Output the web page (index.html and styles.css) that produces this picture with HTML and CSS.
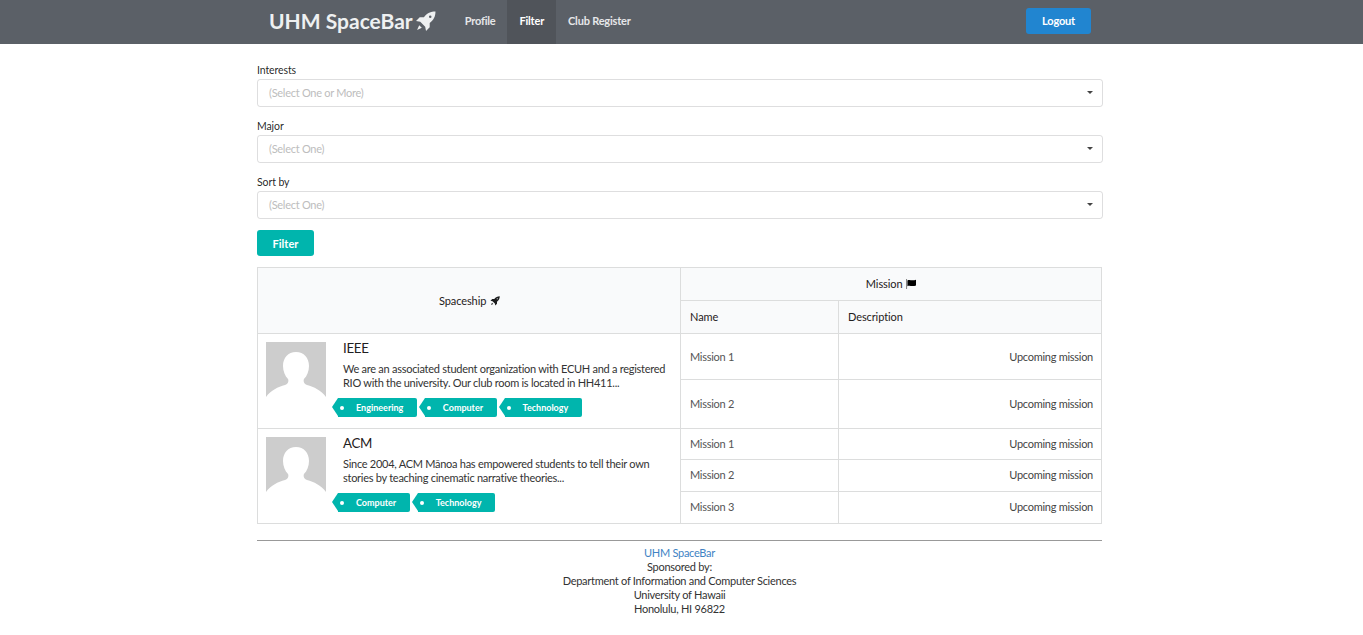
FILE: index.html
```html
<!DOCTYPE html>
<html lang="en">
<head>
    <meta charset="UTF-8">
    <title>UHM SpaceBar</title>
    <link rel="stylesheet" href="styles.css">
</head>
<body>

<header class="navbar">
    <nav class="nav-inner">
        <a class="brand" href="#">UHM SpaceBar
            <svg class="rocket rocket-large" viewBox="0 0 20 20"><path fill-rule="evenodd" d="M19.500.5c-4.500 0-8 1.500-11 5.500H4.500L1 9.500l4 .8 4.700 4.700.8 4 3.500-3.500v-4c4-3 5.500-6.500 5.500-11zM14.500 4.300a1.200 1.200 0 1 1 0 2.400 1.200 1.200 0 0 1 0-2.400zM4 13.500l2.500 2.500-4.500 2z"/></svg>
        </a>
        <a class="nav-item" href="#">Profile</a>
        <a class="nav-item active" href="#">Filter</a>
        <a class="nav-item" href="#">Club Register</a>
        <a class="logout" href="#">Logout</a>
    </nav>
</header>

<main class="container">
    <form class="filter-form">
        <div class="field">
            <label>Interests</label>
            <div class="select">(Select One or More)</div>
        </div>
        <div class="field">
            <label>Major</label>
            <div class="select">(Select One)</div>
        </div>
        <div class="field">
            <label>Sort by</label>
            <div class="select">(Select One)</div>
        </div>
        <button class="filter-btn" type="button">Filter</button>
    </form>

    <table class="clubs">
        <colgroup>
            <col class="col-club">
            <col class="col-name">
            <col class="col-desc">
        </colgroup>
        <thead>
            <tr class="row-head">
                <th rowspan="2" class="center">Spaceship
                    <svg class="rocket" viewBox="0 0 20 20"><path fill-rule="evenodd" d="M19.500.5c-4.500 0-8 1.500-11 5.500H4.500L1 9.500l4 .8 4.700 4.700.8 4 3.500-3.500v-4c4-3 5.500-6.500 5.500-11zM14.500 4.300a1.200 1.200 0 1 1 0 2.400 1.200 1.200 0 0 1 0-2.400zM4 13.500l2.500 2.500-4.500 2z"/></svg>
                </th>
                <th colspan="2" class="center">Mission
                    <svg class="flag" viewBox="0 0 16 14"><path d="M1 0h1.500v14H1z" fill="#888"/><path d="M3 2c3-2 6 1 12-1v8c-6 2-9-1-12 1z"/></svg>
                </th>
            </tr>
            <tr class="row-head">
                <th>Name</th>
                <th>Description</th>
            </tr>
        </thead>
        <tbody>
            <tr class="row-tall">
                <td rowspan="2" class="club-cell">
                    <div class="club">
                        <svg class="avatar" viewBox="0 0 60 60"><rect width="60" height="60" fill="#cdcdcd"/><path d="M30 10c8 0 13 6 13 14 0 5-2 10-5 13-1 2 0 5 3 6 7 2 14 5 19 12v5H0v-5c5-7 12-10 19-12 3-1 4-4 3-6-3-3-5-8-5-13 0-8 5-14 13-14z" fill="#fff"/></svg>
                        <div class="club-body">
                            <h3>IEEE</h3>
                            <p>We are an associated student organization with ECUH and a registered RIO with the university. Our club room is located in HH411...</p>
                            <div class="tags">
                                <span class="tag">Engineering</span>
                                <span class="tag">Computer</span>
                                <span class="tag">Technology</span>
                            </div>
                        </div>
                    </div>
                </td>
                <td>Mission 1</td>
                <td class="right">Upcoming mission</td>
            </tr>
            <tr class="row-tall-last">
                <td>Mission 2</td>
                <td class="right">Upcoming mission</td>
            </tr>
            <tr class="row-first">
                <td rowspan="3" class="club-cell">
                    <div class="club">
                        <svg class="avatar" viewBox="0 0 60 60"><rect width="60" height="60" fill="#cdcdcd"/><path d="M30 10c8 0 13 6 13 14 0 5-2 10-5 13-1 2 0 5 3 6 7 2 14 5 19 12v5H0v-5c5-7 12-10 19-12 3-1 4-4 3-6-3-3-5-8-5-13 0-8 5-14 13-14z" fill="#fff"/></svg>
                        <div class="club-body">
                            <h3>ACM</h3>
                            <p>Since 2004, ACM Mānoa has empowered students to tell their own stories by teaching cinematic narrative theories...</p>
                            <div class="tags">
                                <span class="tag">Computer</span>
                                <span class="tag">Technology</span>
                            </div>
                        </div>
                    </div>
                </td>
                <td>Mission 1</td>
                <td class="right">Upcoming mission</td>
            </tr>
            <tr class="row-short">
                <td>Mission 2</td>
                <td class="right">Upcoming mission</td>
            </tr>
            <tr class="row-short">
                <td>Mission 3</td>
                <td class="right">Upcoming mission</td>
            </tr>
        </tbody>
    </table>

    <footer class="footer">
        <a href="#">UHM SpaceBar</a><br>
        Sponsored by:<br>
        Department of Information and Computer Sciences<br>
        University of Hawaii<br>
        Honolulu, HI 96822
    </footer>
</main>

</body>
</html>
```

FILE: styles.css
```css
body {
    font-family: 'Lato', sans-serif;
    font-size: 11px;
    line-height: 14px;
    letter-spacing: -0.27px;
    margin: 0;
    padding-right: 4px;
    background-color: #fff;
    color: rgba(0, 0, 0, 0.87);
}

a {
    text-decoration: none;
}

/* Top bar */
.navbar {
    background-color: #5b6067;
    height: 44px;
    margin-right: -4px;
    padding-right: 4px;
}

.nav-inner {
    width: 845px;
    height: 44px;
    margin: 0 auto;
    display: flex;
    align-items: stretch;
}

.brand {
    display: flex;
    align-items: center;
    gap: 2px;
    margin-left: 12px;
    margin-right: 17px;
    padding-bottom: 2px;
    color: #eef0f1;
    font-size: 21px;
    font-weight: 700;
    letter-spacing: 0;
    white-space: nowrap;
}

.rocket {
    display: inline-block;
    width: 10px;
    height: 10px;
    margin-left: 1px;
    fill: #1b1c1d;
    vertical-align: -1px;
}

.rocket-large {
    width: 21px;
    height: 21px;
    margin-left: 0;
    fill: #eef0f1;
}

.nav-item {
    display: flex;
    align-items: center;
    padding: 0 12px 2px;
    color: #e6e7e9;
    font-size: 11px;
    font-weight: 700;
    letter-spacing: -0.2px;
}

.nav-item.active {
    background-color: #50545a;
    color: #fff;
}

.logout {
    align-self: center;
    margin-left: auto;
    margin-right: 11px;
    margin-bottom: 2px;
    width: 65px;
    height: 26px;
    line-height: 26px;
    text-align: center;
    background-color: #2185d0;
    color: #fff;
    font-weight: 700;
    letter-spacing: -0.2px;
    border-radius: 3px;
}

/* Filter form */
.container {
    width: 845px;
    margin: 0 auto;
}

.filter-form {
    padding-top: 19px;
}

.field {
    margin-bottom: 12px;
}

.field label {
    display: block;
    height: 16px;
    line-height: 14px;
    font-size: 10.500px;
    letter-spacing: -0.1px;
}

.select {
    height: 26px;
    line-height: 26px;
    margin-right: -1px;
    padding-left: 11px;
    border: 1px solid rgba(34, 36, 38, 0.15);
    border-radius: 3px;
    color: #bdbdbd;
    position: relative;
}

.select::after {
    content: '';
    position: absolute;
    right: 9px;
    top: 11px;
    border-left: 3px solid transparent;
    border-right: 3px solid transparent;
    border-top: 3px solid #444;
}

.filter-btn {
    display: block;
    width: 57px;
    height: 26px;
    margin-top: -1px;
    padding: 0;
    border: none;
    border-radius: 3px;
    background-color: #00b5ad;
    color: #fff;
    font-family: inherit;
    font-size: 11px;
    font-weight: 700;
    letter-spacing: 0;
}

/* Clubs table */
.clubs {
    width: 845px;
    margin-top: 11px;
    table-layout: fixed;
    border-collapse: collapse;
    border: 1px solid #dcdddd;
}

.col-club {
    width: 423px;
}

.col-name {
    width: 158px;
}

.clubs th,
.clubs td {
    padding: 0 8px 0 9px;
    border: 1px solid #dcdddd;
    text-align: left;
    font-weight: 400;
    vertical-align: middle;
}

.clubs th {
    background-color: #f9fafb;
    color: #1f2021;
    letter-spacing: -0.1px;
}

.clubs th.center {
    text-align: center;
}

.clubs td {
    color: #555;
}

.clubs td.right {
    text-align: right;
    color: #444;
}

.row-head {
    height: 33px;
}

.row-tall {
    height: 46px;
}

.row-tall-last {
    height: 49px;
}

.row-first {
    height: 31px;
}

.row-short {
    height: 32px;
}

.clubs .row-short td {
    padding-bottom: 2px;
}

.flag {
    width: 12px;
    height: 10px;
    vertical-align: -1px;
}

.clubs td.club-cell {
    vertical-align: top;
    padding: 8px 8px 0;
}

.club {
    display: flex;
    gap: 17px;
}

.avatar {
    flex: none;
    width: 60px;
    height: 60px;
}

.club-body {
    flex: 1;
    min-width: 0;
}

.club-body h3 {
    margin: 0 0 8px;
    font-size: 13.300px;
    line-height: 12px;
    font-weight: 400;
    color: #1f2021;
}

.club-body p {
    margin: 0 0 8px;
    line-height: 14px;
    font-size: 11px;
    color: #333;
}

/* Tags */
.tags {
    display: flex;
    gap: 2px;
    margin-left: -11px;
}

.tag {
    position: relative;
    height: 19px;
    line-height: 19px;
    margin-left: 6px;
    padding: 0 13.500px 0 18px;
    background-color: #00b5ad;
    color: #fff;
    font-size: 9px;
    font-weight: 700;
    letter-spacing: 0;
    border-radius: 0 2px 2px 0;
}

.tag::before {
    content: '';
    position: absolute;
    left: -6px;
    top: 0;
    border-top: 9.500px solid transparent;
    border-bottom: 9.500px solid transparent;
    border-right: 6px solid #00b5ad;
}

.tag::after {
    content: '';
    position: absolute;
    left: 2px;
    top: 7.500px;
    width: 4px;
    height: 4px;
    border-radius: 50%;
    background-color: #fff;
}

/* Footer */
.footer {
    margin-top: 16px;
    padding-top: 5px;
    border-top: 1px solid #999;
    text-align: center;
    color: #333;
}

.footer a {
    color: #4183c4;
}
```
